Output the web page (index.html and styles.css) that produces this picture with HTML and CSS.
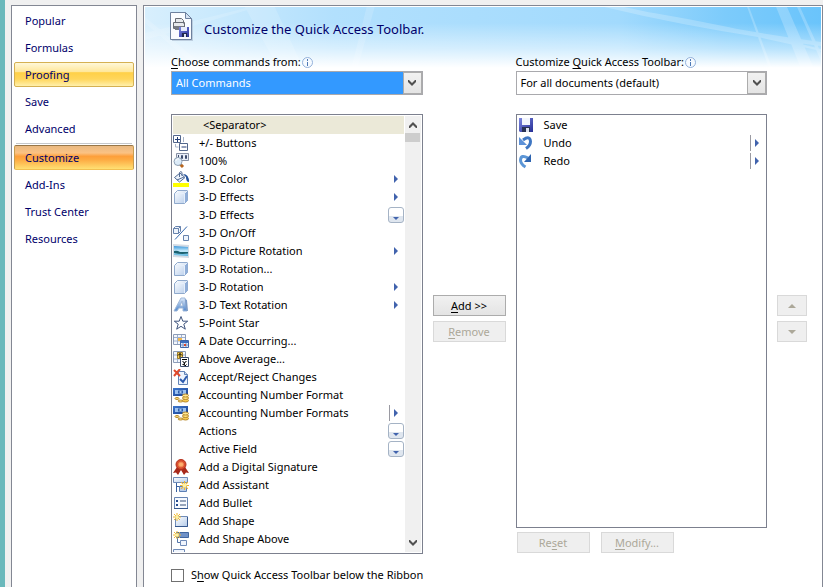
FILE: index.html
```html
<!DOCTYPE html>
<html lang="en">
<head>
<meta charset="utf-8">
<title>Excel Options</title>
<link rel="stylesheet" href="styles.css">
</head>
<body>
<svg class="sprite" aria-hidden="true">
  <defs>
    <linearGradient id="g-face" x1="0" y1="0" x2="1" y2="1"><stop offset="0" stop-color="#fff"/><stop offset="1" stop-color="#b4cbea"/></linearGradient>
    <linearGradient id="g-navy" x1="0" y1="0" x2="1" y2="1"><stop offset="0" stop-color="#7c86e0"/><stop offset="1" stop-color="#262f96"/></linearGradient>
    <linearGradient id="g-bill" x1="0" y1="0" x2="1" y2="1"><stop offset="0" stop-color="#3d78d0"/><stop offset="1" stop-color="#1b3f8c"/></linearGradient>
    <linearGradient id="g-letter" x1="0" y1="0" x2="0" y2="1"><stop offset="0" stop-color="#dce9fa"/><stop offset="1" stop-color="#4f86cc"/></linearGradient>
    <linearGradient id="g-sky" x1="0" y1="0" x2="0" y2="1"><stop offset="0" stop-color="#3b97dd"/><stop offset=".5" stop-color="#c8ecfb"/><stop offset="1" stop-color="#4fb0dc"/></linearGradient>
  </defs>
  <symbol id="plusminus" viewBox="0 0 16 16"><path d="M7.500 7.500V.5h-7v7h7z M6.500 8.500h8v7h-8z" fill="#fff" stroke="#53678c"/><path d="M2 4.500h5M4.500 2v5M8.500 12h5" stroke="#243d75" fill="none"/><path d="M10.500 2v5M2.500 9v3h3" stroke="#a8b4c8" fill="none"/></symbol>
  <symbol id="zoom100" viewBox="0 0 16 16"><path d="M3.500.5h12v7h-12z" fill="#e8edf7" stroke="#8790a4"/><path d="M5.500 2v4M8.500 2.500h1v3h-1zM12.500 2.500h1v3h-1z" fill="none" stroke="#3b4a6b"/><path d="M7 11l3 3" stroke="#b7651d" stroke-width="3"/><circle cx="5" cy="8.500" r="4" fill="#dcebf8" stroke="#8fa1b5"/><path d="M3 8a2 2 0 0 1 3-2" stroke="#fff" fill="none"/></symbol>
  <symbol id="bucket" viewBox="0 0 16 16"><path d="M1.500 6.500L7 2l5 4.500L6.500 11z" fill="#edf3fb" stroke="#516b94"/><path d="M6.500 6V1.500q1.500-2 2.500 0V5M4 9l7-3" fill="none" stroke="#516b94"/><path d="M10 3q6 0 6 8-3 0-3-5z" fill="#24529a"/><path d="M0 12h16v4H0z" fill="#ff0"/></symbol>
  <symbol id="cube" viewBox="0 0 16 16"><path d="M1.500 4.500l3-3h10v10l-3 3h-10z" fill="url(#g-face)" stroke="#8fa9cc"/><path d="M11.500 4.500l3-3v10l-3 3z" fill="#90aed8"/><path d="M2 4.500h9.500V14M11.500 4.500l3-3" fill="none" stroke="#e6effb"/></symbol>
  <symbol id="onoff" viewBox="0 0 16 16"><path d="M.5 3.500l2-2h5v5l-2 2h-5zM.5 3.500h5v5M5.500 3.500l2-2M10.500 10.500h5v5h-5z" fill="#eef4fc" stroke="#6682ad"/><path d="M2 14.500L14 1.500" stroke="#3567ac"/></symbol>
  <symbol id="photo" viewBox="0 0 16 16"><path d="M0 1l16 1v13L0 14z" fill="#d3dbe5"/><path d="M1 3l14 1v9L1 12z" fill="url(#g-sky)"/><path d="M1 8q3-1 6 1l8 0v1.500q-7 1-14-.5z" fill="#1b6170"/></symbol>
  <symbol id="letter" viewBox="0 0 16 16"><path d="M1 14L8 1h4l2 13h-4v-3H6l-2 3zM7 9h3l-1-5z" fill="url(#g-letter)" stroke="#9fb8d9" fill-rule="evenodd"/><path d="M12 2l2 1 1 11h-2z" fill="#7d9cc8"/></symbol>
  <symbol id="star" viewBox="0 0 16 16"><path d="M8 1.500l1.800 4.700h4.900l-3.900 3 1.500 5L8 11.300l-4.300 2.900 1.500-5-3.900-3h4.900z" fill="#fff" stroke="#40557e"/></symbol>
  <symbol id="date" viewBox="0 0 16 16"><path d="M.5 1.500h12v10H.5z" fill="#f4f7fc" stroke="#8c9cb8"/><path d="M1 4.500h11M1 8h11M4.500 2v9M8.500 2v9" stroke="#9fb0ce"/><path d="M5 5h4v3H5z" fill="#f3b84c"/><path d="M7.500 7.500h8v7h-8z" fill="#e4edfb" stroke="#4266a6"/><path d="M8 8h7v2H8z" fill="#3d6fc0"/><path d="M10 10v4M13 10v4M8 12h7" stroke="#7798cc"/><path d="M11 11h2v2h-2z" fill="#d8452c"/></symbol>
  <symbol id="average" viewBox="0 0 16 16"><path d="M.5.5h12v11H.5z" fill="#f4f7fc" stroke="#8c9cb8"/><path d="M1 4h11M1 8h11M4.500 1v10M8.500 1v10" stroke="#9fb0ce"/><path d="M4.500 1.500h5v6h-5z" fill="#ffd65a" stroke="#9b7b2d"/><path d="M7 7V2.500M5 4.500l2-2 2 2" fill="none" stroke="#000"/><path d="M7.500 6.500h8v9h-8z" fill="#fff" stroke="#3c4c6b"/><path d="M9 8.500h5M9.500 10.500q2 0 2 3t2 0M13.500 10.500q-2 0-2 2t-2 1" fill="none" stroke="#000"/></symbol>
  <symbol id="review" viewBox="0 0 16 16"><path d="M5.500 2.500h6l3 3v10h-9z" fill="#edf4fd" stroke="#6384b7"/><path d="M11.500 2.500v3h3" fill="#c8d8ee" stroke="#6384b7"/><path d="M1 1l6 6M7 0L1 7" stroke="#e0492b" stroke-width="2"/><path d="M7 10l3 3 4-6" stroke="#2e5cae" stroke-width="2" fill="none"/></symbol>
  <symbol id="money" viewBox="0 0 16 16"><path d="M0 1h15v8H0z" fill="url(#g-bill)"/><path d="M2 3h11v4H2z" fill="#9bc1f0"/><path d="M5 3.500h5v3H5z" fill="#315fa9"/><path d="M6.500 4h2v2h-2z" fill="#9bc1f0"/><ellipse cx="12.500" cy="13.500" rx="3" ry="1.500" fill="#f6c94d" stroke="#b98a2c"/><ellipse cx="12.500" cy="11" rx="3" ry="1.500" fill="#ffe17c" stroke="#b98a2c"/><ellipse cx="12.500" cy="8.500" rx="3" ry="1.500" fill="#ffe791" stroke="#b98a2c"/><ellipse cx="7.500" cy="14" rx="2.500" ry="1" fill="#ffe17c" stroke="#b98a2c"/><ellipse cx="4" cy="11.500" rx="2" ry="1" fill="#ffe17c" stroke="#b98a2c"/></symbol>
  <symbol id="seal" viewBox="0 0 16 16"><path d="M4 8L0 14l3-.5L5 16l3-5 3 5 2-2.500 3 .5-4-6z" fill="#a7281a"/><circle cx="8" cy="5.500" r="5" fill="#d9502f" stroke="#b5301d"/><circle cx="8" cy="5.500" r="2.500" fill="#ffb06d" stroke="#ee8352"/></symbol>
  <symbol id="spark" viewBox="0 0 8 8"><path d="M4 0v8M0 4h8M1 1l6 6M7 1L1 7" stroke="#f2b630"/><circle cx="4" cy="4" r="1.800" fill="#fff2a0"/></symbol>
  <symbol id="assistant" viewBox="0 0 16 16"><path d="M.5.5h14v5H.5z" fill="url(#g-face)" stroke="#6f8bb8"/><path d="M3.500 6v9M4 9.500h4" stroke="#385f9f"/><path d="M6.500 9.500h7v5h-7z" fill="#b9cdea" stroke="#5c7fb5"/><use href="#spark" x="7" y="4" width="9" height="9"/></symbol>
  <symbol id="bullet" viewBox="0 0 16 16"><path d="M1.500 2.500h13v11h-13z" fill="#f7faff" stroke="#6684b3"/><path d="M1 13.500h14" stroke="#35578e"/><path d="M3 5h2v2H3zM3 9h2v2H3z" fill="#254b8f"/><path d="M7 6h6M7 10h6" stroke="#365179"/></symbol>
  <symbol id="shape" viewBox="0 0 16 16"><path d="M2.500 3.500h12v10h-12z" fill="url(#g-face)" stroke="#6f8bb8"/><path d="M2 13.500h12.500V4" stroke="#35578e" fill="none"/><use href="#spark" width="8" height="8"/></symbol>
  <symbol id="above" viewBox="0 0 16 16"><path d="M3.500 1.500h12v5h-12z" fill="#6f91c7" stroke="#41669f"/><path d="M4.500 7v4.500H7" fill="none" stroke="#5475a8"/><path d="M7.500 9.500h6v5h-6z" fill="#f0f5fd" stroke="#6f8bb8"/><use href="#spark" width="8" height="8"/></symbol>
  <symbol id="below" viewBox="0 0 16 16"><path d="M.5.5h11v5H.5z" fill="#f0f5fd" stroke="#6f8bb8"/></symbol>
  <symbol id="save" viewBox="0 0 16 16"><path d="M1 1h14v14H2l-1-1z" fill="url(#g-navy)"/><path d="M4 1h8v7H4z" fill="#f2f5fd"/><path d="M4 10h8v5H4z" fill="#283153"/><path d="M8 11h3v4H8z" fill="#dce2f0"/></symbol>
  <symbol id="undo" viewBox="0 0 16 16"><path d="M5 5q7-5 7.500 1.500 0 4-4.500 7" fill="none" stroke="#3f76c2" stroke-width="3"/><path d="M1 2v8h8z" fill="#5d91d8"/></symbol>
  <symbol id="redo" viewBox="0 0 16 16"><path d="M10 5Q3 1 2.500 7q0 4 5 7" fill="none" stroke="#5c96d6" stroke-width="3"/><path d="M13 1v8H6z" fill="#2d64b0"/></symbol>
  <symbol id="info" viewBox="0 0 11 11"><circle cx="5.500" cy="5.500" r="5" fill="#f5faff" stroke="#93b1da"/><path d="M5 2h1v2H5zM5 5h1v4H5z" fill="#4d79b6"/></symbol>
  <symbol id="chevron" viewBox="0 0 8 6"><path d="M0 0h1l3 3 3-3h1v2L4 6 0 2z" fill="#505050"/></symbol>
</svg>

<div class="dialog">
  <nav class="sidebar">
    <a href="#popular">Popular</a>
    <a href="#formulas">Formulas</a>
    <a href="#proofing" class="hover">Proofing</a>
    <a href="#save-options">Save</a>
    <a href="#advanced">Advanced</a>
    <hr>
    <a href="#customize" class="current">Customize</a>
    <a href="#addins">Add-Ins</a>
    <a href="#trust">Trust Center</a>
    <a href="#resources">Resources</a>
  </nav>

  <main class="panel">
    <header class="banner">
      <svg class="banner-art" viewBox="0 0 677 64" preserveAspectRatio="none" aria-hidden="true">
        <defs>
          <linearGradient id="b-across"><stop offset="0" stop-color="#d8effd"/><stop offset=".28" stop-color="#b2e0fd"/><stop offset=".7" stop-color="#a2dafd"/><stop offset=".86" stop-color="#7ccbfb"/><stop offset="1" stop-color="#6ac4fb"/></linearGradient>
          <linearGradient id="b-down" x1="0" y1="0" x2="0" y2="1"><stop offset=".25" stop-color="#fff" stop-opacity="0"/><stop offset=".65" stop-color="#fff" stop-opacity=".5"/><stop offset=".95" stop-color="#fff"/></linearGradient>
        </defs>
        <path d="M0 0h677v64H0z" fill="url(#b-across)"/>
        <path d="M0 26L105 0h8L0 33zM100 0h30l30 64h-25zM0 10l65 54h-9L0 16zM222 0h8l-18 64h-6z" fill="#fff" opacity=".15"/>
        <path d="M480 0q90 20 197 35v4Q560 24 460 0zM470 0q100 14 207 42v2Q570 20 470 0zM603 0h2l24 64h-3zM632 0h11l28 64h-13zM653 0h3l21 46v8z" fill="#fff" opacity=".22"/>
        <path d="M0 0h677v64H0z" fill="url(#b-down)"/>
      </svg>
      <svg class="page-icon" viewBox="0 0 24 30" aria-hidden="true"><path d="M2 2h15l6 6v21H2z" fill="#aebfd2" opacity=".7"/><path d="M.5.5h15l6 6v21H.5z" fill="#fafcff" stroke="#6e819e"/><path d="M15.500.5v6h6z" fill="#d7e3f2" stroke="#6e819e"/><path d="M5.500 10.500v-4h6l2 2v3M3.500 10.500h11v6h-11z" fill="#e7e9ec" stroke="#686c74"/><path d="M4 15h10M5 17h7" stroke="#777b83" stroke-width="2"/><path d="M9 15h10v10H9z" fill="url(#g-navy)"/><path d="M11 15h6v4h-6z" fill="#e8edfb"/><path d="M12 21h5v4h-5z" fill="#20284e"/><path d="M14 22h2v3h-2z" fill="#dce2f0"/></svg>
      <h1>Customize the Quick Access Toolbar.</h1>
    </header>

    <div class="columns">
      <section class="column">
        <label class="field-label" for="source"><span><u>C</u>hoose commands from:</span><svg class="info"><use href="#info"/></svg></label>
        <div class="combo focused">
          <select id="source"><option>All Commands</option></select>
          <span class="combo-arrow"><svg><use href="#chevron"/></svg></span>
        </div>
        <div class="listbox commands">
          <ul class="rows">
            <li class="selected"><svg></svg><span>&lt;Separator&gt;</span></li>
            <li><svg><use href="#plusminus"/></svg><span>+/- Buttons</span></li>
            <li><svg><use href="#zoom100"/></svg><span>100%</span></li>
            <li><svg><use href="#bucket"/></svg><span>3-D Color</span><i class="more"></i></li>
            <li><svg><use href="#cube"/></svg><span>3-D Effects</span><i class="more"></i></li>
            <li><svg></svg><span>3-D Effects</span><i class="drop"></i></li>
            <li><svg><use href="#onoff"/></svg><span>3-D On/Off</span></li>
            <li><svg><use href="#photo"/></svg><span>3-D Picture Rotation</span><i class="more"></i></li>
            <li><svg><use href="#cube"/></svg><span>3-D Rotation...</span></li>
            <li><svg><use href="#cube"/></svg><span>3-D Rotation</span><i class="more"></i></li>
            <li><svg><use href="#letter"/></svg><span>3-D Text Rotation</span><i class="more"></i></li>
            <li><svg><use href="#star"/></svg><span>5-Point Star</span></li>
            <li><svg><use href="#date"/></svg><span>A Date Occurring...</span></li>
            <li><svg><use href="#average"/></svg><span>Above Average...</span></li>
            <li><svg><use href="#review"/></svg><span>Accept/Reject Changes</span></li>
            <li><svg><use href="#money"/></svg><span>Accounting Number Format</span></li>
            <li><svg><use href="#money"/></svg><span>Accounting Number Formats</span><i class="more split"></i></li>
            <li><svg></svg><span>Actions</span><i class="drop"></i></li>
            <li><svg></svg><span>Active Field</span><i class="drop"></i></li>
            <li><svg><use href="#seal"/></svg><span>Add a Digital Signature</span></li>
            <li><svg><use href="#assistant"/></svg><span>Add Assistant</span></li>
            <li><svg><use href="#bullet"/></svg><span>Add Bullet</span></li>
            <li><svg><use href="#shape"/></svg><span>Add Shape</span></li>
            <li><svg><use href="#above"/></svg><span>Add Shape Above</span></li>
            <li><svg><use href="#below"/></svg></li>
          </ul>
          <div class="scrollbar"><svg class="up"><use href="#chevron"/></svg><b></b><svg class="down"><use href="#chevron"/></svg></div>
        </div>
        <label class="check"><input type="checkbox"><span>S<u>h</u>ow Quick Access Toolbar below the Ribbon</span></label>
      </section>

      <div class="side-buttons">
        <button type="button"><span><u>A</u>dd &gt;&gt;</span></button>
        <button type="button" disabled><span><u>R</u>emove</span></button>
      </div>

      <section class="column">
        <label class="field-label" for="target"><span>Customize <u>Q</u>uick Access Toolbar:</span><svg class="info"><use href="#info"/></svg></label>
        <div class="combo">
          <select id="target"><option>For all documents (default)</option></select>
          <span class="combo-arrow"><svg><use href="#chevron"/></svg></span>
        </div>
        <div class="listbox toolbar-items">
          <ul class="rows">
            <li><svg><use href="#save"/></svg><span>Save</span></li>
            <li><svg><use href="#undo"/></svg><span>Undo</span><i class="more split"></i></li>
            <li><svg><use href="#redo"/></svg><span>Redo</span><i class="more split"></i></li>
          </ul>
        </div>
        <div class="list-buttons">
          <button type="button" disabled><span>Re<u>s</u>et</span></button>
          <button type="button" disabled><span><u>M</u>odify...</span></button>
        </div>
      </section>

      <div class="side-buttons">
        <button type="button" disabled aria-label="Move up"><i class="move-up"></i></button>
        <button type="button" disabled aria-label="Move down"><i class="move-down"></i></button>
      </div>
    </div>
  </main>
</div>
</body>
</html>
```

FILE: styles.css
```css
* { box-sizing: border-box; }

body {
  margin: 0;
  background: #f0f0f0;
  color: #000;
  font: 11px/16px "Noto Sans", "Open Sans", sans-serif;
}

.sprite { position: absolute; width: 0; height: 0; }

.dialog {
  display: flex;
  gap: 6px;
  min-height: 100vh;
  padding: 5px 0 0 6px;
  border-left: 5px solid #6ab8bb;
}

/* Category list */
.sidebar {
  flex: 0 0 126px;
  padding: 2px;
  border: 1px solid #838793;
  border-bottom: 0;
  background: #fff;
}

.sidebar a {
  display: block;
  height: 25px;
  margin-bottom: 2px;
  padding: 3px 10px;
  border: 1px solid transparent;
  border-radius: 2px;
  color: #00006b;
  line-height: 17px;
  text-decoration: none;
}

.sidebar hr {
  height: 2px;
  margin: 0 2px;
  border: 0;
  border-top: 1px solid #c5c8cb;
}

.sidebar .hover {
  border-color: #d5b152;
  background: linear-gradient(#fff8d9, #ffe79a 38%, #ffd048 42%, #ffd65c 70%, #fff0ac);
}

.sidebar .current {
  border-color: #977647 #c79d50 #f2c052;
  background: linear-gradient(#e9b981, #fbc283 30%, #fd9f3a 45%, #fdab43 60%, #ffe073);
}

/* Main panel */
.panel {
  flex: 1;
  min-width: 0;
  padding: 1px;
  border: 1px solid #838793;
  border-bottom: 0;
  background: #fff;
}

.banner {
  position: relative;
  display: flex;
  gap: 10px;
  height: 46px;
  padding: 5px 25px;
}

.banner-art {
  position: absolute;
  top: 0;
  left: 0;
  width: 100%;
  height: 64px;
}

.page-icon { position: relative; width: 24px; height: 30px; }

.banner h1 {
  position: relative;
  margin: 0;
  color: #00006b;
  font-size: 13px;
  font-weight: 400;
  line-height: 34px;
}

.columns {
  position: relative;
  display: grid;
  grid-template-columns: 1fr 73px 1fr 30px;
  gap: 10px;
  padding: 0 14px 0 26px;
}

.column { display: flex; flex-direction: column; min-width: 0; }

.field-label {
  display: flex;
  align-items: center;
  gap: 1px;
  height: 18px;
}

.info { width: 11px; height: 11px; overflow: visible; }

u { text-underline-offset: 2px; }

.combo {
  display: flex;
  height: 24px;
  margin-bottom: 19px;
  border: 1px solid #a9a9ad;
  background: #fff;
}

.combo select {
  flex: 1;
  min-width: 0;
  padding: 0 4px;
  border: 0;
  border-radius: 0;
  background: transparent;
  color: inherit;
  font: inherit;
  appearance: none;
}

.combo.focused select { background: #3399ff; color: #fff; }

.combo-arrow {
  display: grid;
  place-items: center;
  width: 19px;
  border: 1px solid #acacac;
  background: linear-gradient(#f1f1f1, #e4e4e4);
}

.combo-arrow svg { width: 8px; height: 6px; }

.listbox {
  display: flex;
  padding: 1px;
  border: 1px solid #7c808e;
  background: #fff;
}

.commands { height: 440px; }
.toolbar-items { height: 414px; }

.rows {
  flex: 1;
  min-width: 0;
  margin: 0;
  padding: 0;
  overflow: hidden;
  list-style: none;
}

.rows li {
  display: flex;
  align-items: center;
  gap: 10px;
  height: 18px;
}

.rows li > svg { flex: none; width: 16px; height: 16px; }
.rows .selected { background: #ebe9d8; }
.rows .selected span { padding-left: 4px; }

.more {
  display: flex;
  align-items: center;
  width: 15px;
  height: 16px;
  margin-left: auto;
  padding-left: 5px;
}

.more::before {
  content: "";
  border: solid transparent;
  border-width: 4px 0 4px 4px;
  border-left-color: #4163ad;
}

.split { padding-left: 4px; border-left: 1px solid #9a9aa2; }

.drop {
  display: flex;
  align-items: flex-end;
  justify-content: center;
  width: 16px;
  height: 16px;
  margin-left: auto;
  padding-bottom: 2px;
  border: 1px solid #a5b3c5;
  border-radius: 3px;
  background: linear-gradient(#fff 55%, #dfe6ef 60%);
}

.drop::before {
  content: "";
  border: solid transparent;
  border-width: 3px 3px 0;
  border-top-color: #4163ad;
}

.scrollbar {
  display: flex;
  flex-direction: column;
  align-items: center;
  width: 16px;
  margin-left: 1px;
  padding: 6px 0;
  background: #f0f0f0;
}

.scrollbar svg { width: 8px; height: 6px; }
.scrollbar .up { transform: rotate(180deg); }
.scrollbar .down { margin-top: auto; }

.scrollbar b {
  width: 15px;
  height: 9px;
  margin-top: 5px;
  background: #cdcdcd;
}

.check {
  display: flex;
  align-items: center;
  gap: 7px;
  margin-top: 13px;
  white-space: nowrap;
}

.check input {
  flex: none;
  width: 13px;
  height: 13px;
  margin: 0;
  border: 1px solid #707070;
  background: #fff;
  appearance: none;
}

.check input:checked { background: #3399ff; }

/* Push buttons */
button {
  display: grid;
  place-items: center;
  height: 21px;
  padding: 0;
  border: 1px solid #acacac;
  background: linear-gradient(#f1f1f1, #e4e4e4);
  color: #000;
  font: inherit;
}

button:disabled {
  border-color: #d9d9d9;
  background: #efefef;
  color: #aca899;
}

.side-buttons {
  display: flex;
  flex-direction: column;
  gap: 5px;
  padding-top: 242px;
}

.list-buttons {
  display: flex;
  gap: 11px;
  margin-top: 4px;
  padding-left: 1px;
}

.list-buttons button { width: 73px; }

.move-up, .move-down { border: solid transparent; }
.move-up { border-width: 0 4px 4px; border-bottom-color: #aca899; }
.move-down { border-width: 4px 4px 0; border-top-color: #aca899; }
```
